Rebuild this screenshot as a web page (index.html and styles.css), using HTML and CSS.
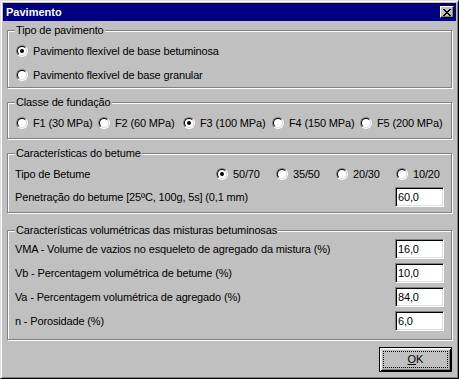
FILE: index.html
```html
<!DOCTYPE html>
<html lang="pt">
<head>
  <meta charset="UTF-8" />
  <title>Pavimento</title>
  <link rel="stylesheet" href="styles.css">
</head>
<body>
  <div class="window">
    <div class="titlebar">
      <span class="title">Pavimento</span>
      <span class="close-btn">
        <svg width="8" height="7" viewBox="0 0 8 7" shape-rendering="crispEdges"><path d="M0 0h2v1H0zM6 0h2v1H6zM1 1h2v1H1zM5 1h2v1H5zM2 2h4v1H2zM3 3h2v1H3zM2 4h4v1H2zM1 5h2v1H1zM5 5h2v1H5zM0 6h2v1H0zM6 6h2v1H6z" fill="#000"/></svg>
      </span>
    </div>

    <div class="client">
      <!-- Tipo de pavimento -->
      <fieldset class="group group-tipo">
        <legend>Tipo de pavimento</legend>
        <label class="row opt"><span class="radio checked"><span class="radio-in"></span></span>Pavimento flexível de base betuminosa</label>
        <label class="row opt"><span class="radio"><span class="radio-in"></span></span>Pavimento flexível de base granular</label>
      </fieldset>

      <!-- Classe de fundação -->
      <fieldset class="group group-fund">
        <legend>Classe de fundação</legend>
        <div class="fund-row">
          <label class="opt"><span class="radio"><span class="radio-in"></span></span>F1 (30 MPa)</label>
          <label class="opt"><span class="radio"><span class="radio-in"></span></span>F2 (60 MPa)</label>
          <label class="opt"><span class="radio checked"><span class="radio-in"></span></span>F3 (100 MPa)</label>
          <label class="opt"><span class="radio"><span class="radio-in"></span></span>F4 (150 MPa)</label>
          <label class="opt"><span class="radio"><span class="radio-in"></span></span>F5 (200 MPa)</label>
        </div>
      </fieldset>

      <!-- Características do betume -->
      <fieldset class="group group-betume">
        <legend>Características do betume</legend>
        <div class="betume-row">
          <span>Tipo de Betume</span>
          <label class="opt"><span class="radio checked"><span class="radio-in"></span></span>50/70</label>
          <label class="opt"><span class="radio"><span class="radio-in"></span></span>35/50</label>
          <label class="opt"><span class="radio"><span class="radio-in"></span></span>20/30</label>
          <label class="opt"><span class="radio"><span class="radio-in"></span></span>10/20</label>
        </div>
        <div class="field-row pen-row">
          <span>Penetração do betume [25ºC, 100g, 5s] (0,1 mm)</span>
          <span class="field">60,0</span>
        </div>
      </fieldset>

      <!-- Características volumétricas -->
      <fieldset class="group group-vol">
        <legend>Características volumétricas das misturas betuminosas</legend>
        <div class="field-row">
          <span>VMA - Volume de vazios no esqueleto de agregado da mistura (%)</span>
          <span class="field">16,0</span>
        </div>
        <div class="field-row">
          <span>Vb - Percentagem volumétrica de betume (%)</span>
          <span class="field">10,0</span>
        </div>
        <div class="field-row">
          <span>Va - Percentagem volumétrica de agregado (%)</span>
          <span class="field">84,0</span>
        </div>
        <div class="field-row">
          <span>n - Porosidade (%)</span>
          <span class="field">6,0</span>
        </div>
      </fieldset>

      <div class="actions">
        <button class="ok-btn"><span class="focus"><u>O</u>K</span></button>
      </div>
    </div>
  </div>
</body>
</html>
```

FILE: styles.css
```css
* {
  box-sizing: border-box;
}

body {
  margin: 0;
  background: #c0c0c0;
  font-family: "Liberation Sans", Arial, sans-serif;
  font-size: 11px;
  line-height: 13px;
  letter-spacing: -0.15px;
  color: #000;
}

.window {
  width: 459px;
  height: 379px;
  border: 1px solid;
  border-color: #dfdfdf #000 #000 #dfdfdf;
  box-shadow: inset 1px 1px #fff, inset -1px -1px #808080;
  padding: 2px;
  display: flex;
  flex-direction: column;
}

.titlebar {
  height: 18px;
  background: #000080;
  display: flex;
  align-items: center;
  justify-content: space-between;
  padding: 0 2px 0 3px;
}

.title {
  color: #fff;
  font-weight: bold;
  letter-spacing: 0;
}

.close-btn {
  width: 14px;
  height: 12px;
  background: #c0c0c0;
  border: 1px solid;
  border-color: #fff #000 #000 #fff;
  box-shadow: inset -1px -1px #808080;
  display: flex;
  align-items: center;
  justify-content: center;
}

.close-btn svg {
  display: block;
}

.client {
  padding: 0 4px;
  display: flex;
  flex-direction: column;
}

/* etched group boxes */
.group {
  margin: 0;
  min-width: 0;
  border: 1px solid #808080;
  box-shadow: inset 1px 1px #fff, 1px 1px #fff;
  padding: 0 7px;
}

.group legend {
  padding: 0 1px;
  background: #c0c0c0;
  line-height: 13px;
}

.group-tipo {
  margin-top: 3px;
  padding-top: 2px;
}

.group-fund {
  margin-top: 8px;
  padding-top: 2px;
  padding-bottom: 3px;
}

.group-betume {
  margin-top: 8px;
  padding-top: 2px;
  padding-bottom: 4px;
}

.group-vol {
  margin-top: 11px;
  padding-bottom: 6px;
}

.row {
  height: 24px;
}

.opt {
  display: flex;
  align-items: center;
  padding-left: 1px;
  white-space: nowrap;
}

/* radio buttons */
.radio {
  width: 12px;
  height: 12px;
  flex: none;
  display: flex;
  margin-right: 5px;
  border-radius: 50%;
  border: 1px solid;
  border-color: #808080 #fff #fff #808080;
}

.radio-in {
  flex: 1;
  display: flex;
  align-items: center;
  justify-content: center;
  border-radius: 50%;
  border: 1px solid;
  border-color: #000 #dfdfdf #dfdfdf #000;
  background: #fff;
}

.radio.checked .radio-in::after {
  content: "";
  width: 4px;
  height: 4px;
  border-radius: 50%;
  background: #000;
}

.fund-row {
  display: grid;
  grid-template-columns: 82px 85px 89px 88px auto;
  align-items: center;
  height: 24px;
}

.betume-row {
  display: grid;
  grid-template-columns: 200px repeat(4, 60px);
  align-items: center;
  height: 24px;
}

.field-row {
  display: flex;
  align-items: center;
  justify-content: space-between;
  height: 24px;
}

.pen-row {
  height: 22px;
}

.field {
  width: 49px;
  height: 20px;
  background: #fff;
  border: 1px solid;
  border-color: #808080 #fff #fff #808080;
  box-shadow: inset 1px 1px #000, inset -1px -1px #dfdfdf;
  padding: 0 2px;
  display: flex;
  align-items: center;
}

.actions {
  display: flex;
  justify-content: flex-end;
  margin-top: 7px;
}

.ok-btn {
  width: 73px;
  height: 25px;
  padding: 3px;
  background: #c0c0c0;
  border: 1px solid #000;
  box-shadow: inset 1px 1px #fff, inset -1px -1px #000, inset 2px 2px #dfdfdf, inset -2px -2px #808080;
  font: inherit;
  color: #000;
  display: flex;
}

.ok-btn .focus {
  flex: 1;
  display: flex;
  align-items: center;
  justify-content: center;
  border: 1px dotted #000;
}
```
